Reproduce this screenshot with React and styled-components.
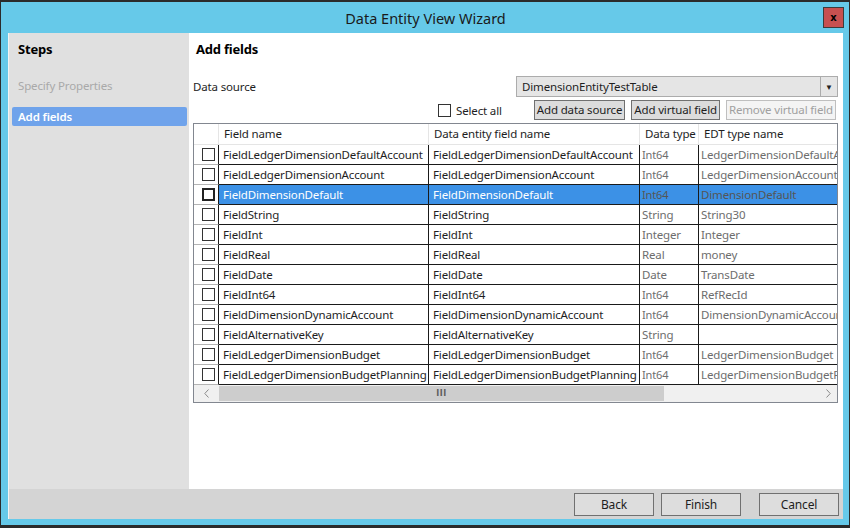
import React from "react";
import styled, { createGlobalStyle } from "styled-components";

const GlobalStyle = createGlobalStyle`
  html, body {
    margin: 0;
    padding: 0;
    background: #2b2b2b;
    overflow: hidden;
  }
  body {
    font-family: "Noto Sans", "Open Sans", sans-serif;
    font-size: 11.5px;
    letter-spacing: -0.15px;
    color: #1e1e1e;
  }
`;

const rows = [
  ["FieldLedgerDimensionDefaultAccount", "FieldLedgerDimensionDefaultAccount", "Int64", "LedgerDimensionDefaultAccount"],
  ["FieldLedgerDimensionAccount", "FieldLedgerDimensionAccount", "Int64", "LedgerDimensionAccount"],
  ["FieldDimensionDefault", "FieldDimensionDefault", "Int64", "DimensionDefault"],
  ["FieldString", "FieldString", "String", "String30"],
  ["FieldInt", "FieldInt", "Integer", "Integer"],
  ["FieldReal", "FieldReal", "Real", "money"],
  ["FieldDate", "FieldDate", "Date", "TransDate"],
  ["FieldInt64", "FieldInt64", "Int64", "RefRecId"],
  ["FieldDimensionDynamicAccount", "FieldDimensionDynamicAccount", "Int64", "DimensionDynamicAccount"],
  ["FieldAlternativeKey", "FieldAlternativeKey", "String", ""],
  ["FieldLedgerDimensionBudget", "FieldLedgerDimensionBudget", "Int64", "LedgerDimensionBudget"],
  ["FieldLedgerDimensionBudgetPlanning", "FieldLedgerDimensionBudgetPlanning", "Int64", "LedgerDimensionBudgetPlanning"],
];
const SELECTED = 2;
const cols = [25, 210, 211, 59, 200];

const Window = styled.div`
  width: 835px;
  height: 517px;
  margin: 2px 0 0 1px;
  padding: 0 6px 6px 7px;
  background: #66c9e9;
  display: flex;
  flex-direction: column;
`;

const TitleBar = styled.div`
  position: relative;
  height: 31px;
  display: flex;
  align-items: center;
  justify-content: center;
  font-size: 14.5px;
  letter-spacing: 0;
  color: #1a1a1a;
`;

const CloseButton = styled.div`
  position: absolute;
  right: -1px;
  top: 5px;
  width: 19px;
  height: 19px;
  background: #c75050;
  border: 1px solid #3c3c3c;
  display: flex;
  align-items: center;
  justify-content: center;
  font-family: "DejaVu Sans", sans-serif;
  font-size: 10px;
  font-weight: bold;
  line-height: 1;
  color: #000;
`;

const Client = styled.div`
  flex: 1;
  display: grid;
  grid-template-columns: 180px 1fr;
  grid-template-rows: 1fr 30px;
  border-left: 1px solid #f4f4f4;
  min-height: 0;
`;

const StepsPanel = styled.div`
  background: #e0e0e0;
  padding: 8px 2px 0 3px;
  display: flex;
  flex-direction: column;
`;

const PanelHeading = styled.div`
  font-weight: bold;
  font-size: 13px;
  letter-spacing: -0.2px;
  height: 17px;
  line-height: 17px;
  padding-left: ${(p) => p.$indent || 6}px;
  color: #000;
`;

const Step = styled.div`
  height: 19px;
  line-height: 19px;
  padding-left: 6px;
  border-radius: 2px;
  color: ${(p) => (p.$active ? "#fff" : "#a9a9a9")};
  background: ${(p) => (p.$active ? "#6fa3eb" : "transparent")};
  font-weight: ${(p) => (p.$active ? 600 : 400)};
  margin-top: ${(p) => p.$gap}px;
`;

const Main = styled.div`
  background: #fff;
  padding: 8px 4px 0 4px;
  display: flex;
  flex-direction: column;
`;

const SourceRow = styled.div`
  display: flex;
  align-items: center;
  justify-content: space-between;
  margin-top: 18px;
  padding-right: 1px;
`;

const Label = styled.span`
  color: #1e1e1e;
`;

const Dropdown = styled.div`
  width: 320px;
  height: 19px;
  background: #e5e5e5;
  border: 1px solid #acacac;
  display: flex;
  align-items: center;
`;

const DropdownText = styled.div`
  flex: 1;
  padding-left: 5px;
`;

const DropdownArrow = styled.div`
  width: 16px;
  height: 100%;
  border-left: 1px solid #acacac;
  display: flex;
  align-items: center;
  justify-content: center;
  font-size: 8px;
  color: #222;
`;

const ActionRow = styled.div`
  display: flex;
  align-items: center;
  justify-content: flex-end;
  margin-top: 3px;
  padding-right: 3px;
  height: 20px;
`;

const SelectAll = styled.label`
  display: flex;
  align-items: center;
  gap: 5px;
  margin-right: 32px;
`;

const Box = styled.span`
  display: inline-block;
  box-sizing: border-box;
  width: 13px;
  height: 13px;
  background: #fff;
  border: ${(p) => (p.$focus ? "2px solid #222" : "1px solid #333")};
`;

const SmallButton = styled.div`
  height: 18px;
  line-height: 18px;
  padding: 0 2px;
  margin-left: ${(p) => p.$gap || 0}px;
  border: 1px solid ${(p) => (p.$disabled ? "#bfbfbf" : "#707070")};
  background: ${(p) => (p.$disabled ? "#f4f4f4" : "#dcdcdc")};
  color: ${(p) => (p.$disabled ? "#a0a0a0" : "#1e1e1e")};
  white-space: nowrap;
`;

const GridBox = styled.div`
  margin-top: 3px;
  width: 643px;
  border: 1px solid #828790;
  overflow: hidden;
`;

const GridRow = styled.div`
  display: flex;
  height: ${(p) => (p.$header ? 21 : 20)}px;
  width: max-content;
`;

const HeaderCell = styled.div`
  box-sizing: border-box;
  width: ${(p) => p.$w}px;
  flex: none;
  padding-left: 5px;
  line-height: 20px;
  border-right: 1px solid #e5e5e5;
  border-bottom: 1px solid #e5e5e5;
  color: #1e1e1e;
  white-space: nowrap;
  overflow: hidden;
`;

const CheckCell = styled.div`
  box-sizing: border-box;
  width: ${cols[0]}px;
  flex: none;
  border-right: 1px solid #1a1a1a;
  border-bottom: 1px solid #b4b4b4;
  background: #fff;
  display: flex;
  align-items: center;
  padding-left: 8px;
`;

const Cell = styled.div`
  box-sizing: border-box;
  width: ${(p) => p.$w}px;
  flex: none;
  padding-left: ${(p) => (p.$muted ? 2 : 4)}px;
  line-height: 19px;
  border-right: 1px solid #1a1a1a;
  border-bottom: 1px solid #1a1a1a;
  white-space: nowrap;
  overflow: hidden;
  background: ${(p) => (p.$selected ? "#3c91e6" : "#fff")};
  color: ${(p) =>
    p.$muted ? (p.$selected ? "#555" : "#6d6d6d") : p.$selected ? "#fff" : "#1e1e1e"};
  font-size: ${(p) => (p.$small ? 11 : 11.5)}px;
`;

const ScrollBar = styled.div`
  display: flex;
  height: 17px;
  background: #f0f0f0;
`;

const ScrollArrow = styled.div`
  width: ${(p) => p.$w}px;
  display: flex;
  align-items: center;
  justify-content: center;
  background: #f0f0f0;
`;

const Thumb = styled.div`
  width: 445px;
  margin: 1px 0;
  background: #cdcdcd;
  display: flex;
  align-items: center;
  justify-content: center;
  color: #606060;
  font-family: "DejaVu Sans", sans-serif;
  font-size: 8px;
  font-weight: bold;
  letter-spacing: 0.5px;
`;

const Track = styled.div`
  flex: 1;
`;

const Footer = styled.div`
  grid-column: 1 / 3;
  background: #d4d4d4;
  display: flex;
  justify-content: flex-end;
  align-items: flex-start;
  padding: 4px 4px 0 0;
`;

const FooterButton = styled.div`
  width: 78px;
  height: 21px;
  line-height: 21px;
  text-align: center;
  border: 1px solid #707070;
  background: #dddddd;
  color: #1e1e1e;
  font-size: 12px;
  margin-left: ${(p) => p.$gap}px;
`;

const Chevron = ({ left }) => (
  <svg width="5" height="9" viewBox="0 0 5 9">
    <path
      d={left ? "M4.5 0.5 L0.8 4.5 L4.5 8.5" : "M0.5 0.5 L4.2 4.5 L0.5 8.5"}
      fill="none"
      stroke="#8a8a8a"
      strokeWidth="1"
    />
  </svg>
);

export default function App() {
  return (
    <>
      <GlobalStyle />
      <Window>
        <TitleBar>
          Data Entity View Wizard
          <CloseButton>x</CloseButton>
        </TitleBar>
        <Client>
          <StepsPanel>
            <PanelHeading>Steps</PanelHeading>
            <Step $gap={18}>Specify Properties</Step>
            <Step $active $gap={12}>Add fields</Step>
          </StepsPanel>
          <Main>
            <PanelHeading $indent={3}>Add fields</PanelHeading>
            <SourceRow>
              <Label>Data source</Label>
              <Dropdown>
                <DropdownText>DimensionEntityTestTable</DropdownText>
                <DropdownArrow>▼</DropdownArrow>
              </Dropdown>
            </SourceRow>
            <ActionRow>
              <SelectAll>
                <Box />
                Select all
              </SelectAll>
              <SmallButton>Add data source</SmallButton>
              <SmallButton $gap={6}>Add virtual field</SmallButton>
              <SmallButton $gap={6} $disabled>
                Remove virtual field
              </SmallButton>
            </ActionRow>
            <GridBox>
              <GridRow $header>
                <HeaderCell $w={cols[0]} />
                <HeaderCell $w={cols[1]}>Field name</HeaderCell>
                <HeaderCell $w={cols[2]}>Data entity field name</HeaderCell>
                <HeaderCell $w={cols[3]}>Data type</HeaderCell>
                <HeaderCell $w={cols[4]}>EDT type name</HeaderCell>
              </GridRow>
              {rows.map((r, i) => {
                const sel = i === SELECTED;
                return (
                  <GridRow key={i}>
                    <CheckCell>
                      <Box $focus={sel} />
                    </CheckCell>
                    <Cell $w={cols[1]} $selected={sel}>{r[0]}</Cell>
                    <Cell $w={cols[2]} $selected={sel}>{r[1]}</Cell>
                    <Cell $w={cols[3]} $selected={sel} $muted $small={r[2] === "Int64"}>
                      {r[2]}
                    </Cell>
                    <Cell $w={cols[4]} $selected={sel} $muted>{r[3]}</Cell>
                  </GridRow>
                );
              })}
              <ScrollBar>
                <ScrollArrow $w={25}>
                  <Chevron left />
                </ScrollArrow>
                <Thumb>III</Thumb>
                <Track />
                <ScrollArrow $w={17}>
                  <Chevron />
                </ScrollArrow>
              </ScrollBar>
            </GridBox>
          </Main>
          <Footer>
            <FooterButton $gap={0}>Back</FooterButton>
            <FooterButton $gap={7}>Finish</FooterButton>
            <FooterButton $gap={18}>Cancel</FooterButton>
          </Footer>
        </Client>
      </Window>
    </>
  );
}
